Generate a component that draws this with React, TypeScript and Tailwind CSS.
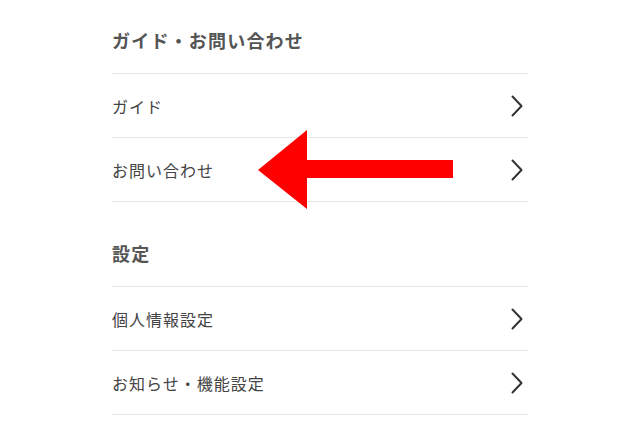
import React from 'react';

// --- TYPES --- //

interface Section {
    title: string;
    items: string[];
}

const sections: Section[] = [
    { title: 'ガイド・お問い合わせ', items: ['ガイド', 'お問い合わせ'] },
    { title: '設定', items: ['個人情報設定', 'お知らせ・機能設定'] },
];

// --- SUB-COMPONENTS --- //

const Chevron: React.FC = () => (
    <svg width="12" height="22" viewBox="0 0 12 22" fill="none" className="shrink-0">
        <path d="M1.5 1.5 L10.5 11 L1.5 20.5" stroke="#333" strokeWidth="2" strokeLinecap="round" strokeLinejoin="round" />
    </svg>
);

const MenuRow: React.FC<{ label: string }> = ({ label }) => (
    <div className="flex items-center justify-between h-[64px] border-b border-[#e6e6e6] pr-[5px]">
        <span className="text-[16px] text-[#444] tracking-[1px]">{label}</span>
        <Chevron />
    </div>
);

const RedArrow: React.FC = () => (
    <svg className="absolute left-[258px] top-[130px]" width="196" height="79" viewBox="0 0 196 79">
        <polygon points="0,40 49,0 49,30 195,30 195,48 49,48 49,79" fill="#ff0000" />
    </svg>
);

// --- MAIN COMPONENT --- //

const App: React.FC = () => {
    return (
        <div
            className="relative w-[640px] h-[426px] bg-white overflow-hidden"
            style={{ fontFamily: '"Noto Sans CJK JP", "Noto Sans", sans-serif' }}
        >
            <div className="mx-[112px] pt-[28px]">
                {sections.map((section, i) => (
                    <div key={section.title} className={i > 0 ? 'pt-[39px]' : ''}>
                        <div className="h-[24px] flex items-center mb-[21px]">
                            <h2 className="text-[18px] font-bold text-[#555] tracking-[1.2px]">{section.title}</h2>
                        </div>
                        <div className="border-t border-[#e6e6e6]">
                            {section.items.map((item) => (
                                <MenuRow key={item} label={item} />
                            ))}
                        </div>
                    </div>
                ))}
            </div>
            <RedArrow />
        </div>
    );
};

export default App;
